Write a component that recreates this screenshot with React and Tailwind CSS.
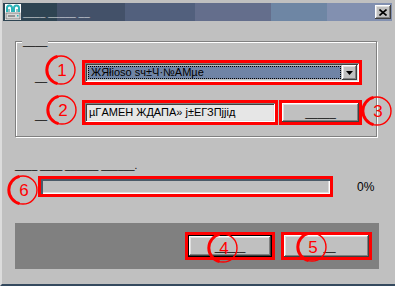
import React from "react";

const raised =
  "shadow-[inset_-1px_-1px_0_#404040,inset_1px_1px_0_#ffffff,inset_-2px_-2px_0_#808080,inset_2px_2px_0_#dfdfdf]";
const sunken =
  "shadow-[inset_1px_1px_0_#808080,inset_-1px_-1px_0_#ffffff,inset_2px_2px_0_#404040,inset_-2px_-2px_0_#dfdfdf]";

const Marker = ({ n, x, y }) => (
  <svg
    className="absolute pointer-events-none"
    style={{ left: x - 17, top: y - 17 }}
    width="34"
    height="34"
    viewBox="0 0 34 34"
  >
    <circle cx="17" cy="17" r="14" fill="none" stroke="#ff0000" strokeWidth="1.4" />
    <path
      d="M15 3.4 A14 14 0 0 0 15 30.6"
      fill="none"
      stroke="#ff0000"
      strokeWidth="3"
      transform="translate(-1.5 0)"
    />
    <text
      x="18"
      y="23"
      textAnchor="middle"
      fill="#ff0000"
      fontFamily="Liberation Sans, Arial, sans-serif"
      fontSize="17"
    >
      {n}
    </text>
  </svg>
);

const AppIcon = () => (
  <svg width="16" height="16" viewBox="0 0 16 16">
    <rect x="0" y="0" width="16" height="16" fill="#ffffff" />
    <path d="M2 8 V4 Q2 1.5 4.5 1.5 Q7 1.5 7 4 V8" fill="none" stroke="#2bb3b8" strokeWidth="2" />
    <path d="M9 8 V4 Q9 1.5 11.5 1.5 Q14 1.5 14 4 V8" fill="none" stroke="#2bb3b8" strokeWidth="2" />
    <path d="M4 5 V8 M12 5 V8" stroke="#1e7c80" strokeWidth="1" />
    <rect x="1" y="9" width="14" height="6" fill="#d8d8d8" stroke="#707070" strokeWidth="0.8" />
    <rect x="3" y="11.5" width="7" height="1" fill="#505050" />
    <rect x="12" y="11" width="1.5" height="1.5" fill="#2bb3b8" />
  </svg>
);

export default function App() {
  return (
    <div
      className="relative w-[395px] h-[286px] bg-[#c0c0c0] flex flex-col border-l-2 border-l-[#dcdcdc] border-b-2 border-b-[#34495e] overflow-hidden"
      style={{ fontFamily: "'Liberation Sans', Arial, sans-serif" }}
    >
      {/* title bar */}
      <div className="mt-[3px] ml-[1px] mr-[3px] h-[18px] flex items-center bg-[linear-gradient(to_right,#2e4452_0px,#2e4452_54px,#435169_54px,#435169_122px,#52607d_122px,#52607d_192px,#646e8c_192px,#646e8c_268px,#6e86a4_268px,#6e86a4_324px,#8290b0_324px)]">
        <div className="ml-[2px] flex items-center">
          <AppIcon />
        </div>
        <div className="ml-[2px] text-white text-[10px] font-bold leading-none mt-[2px] whitespace-pre">
          ____ _____ __
        </div>
        <div className="flex-1" />
        <div className={`w-[16px] h-[14px] bg-[#c0c0c0] ${raised} flex items-center justify-center mr-[1px]`}>
          <svg width="8" height="7" viewBox="0 0 8 7">
            <path d="M0.5 0.5 L7.5 6.5 M7.5 0.5 L0.5 6.5" stroke="#000" strokeWidth="1.6" />
          </svg>
        </div>
      </div>

      {/* group box */}
      <div className="relative mt-[20px] ml-[13px] w-[362px] h-[96px] border border-[#808080] shadow-[inset_1px_1px_0_#ffffff,1px_1px_0_#ffffff]">
        <div className="absolute -top-[8px] left-[6px] px-[1px] bg-[#c0c0c0] text-[11px] leading-[14px] text-black">
          ____
        </div>
        <div className="flex flex-col pt-[18px] pl-[19px]">
          {/* row 1 */}
          <div className="flex items-center h-[25px]">
            <div className="w-[47px] text-[11px] text-black leading-none mt-[10px]">__</div>
            <div className="w-[280px] h-[25px] border-[3px] border-[#ff0000] bg-[#c0c0c0]">
              <div className={`h-full ${sunken} p-[2px] flex`}>
                <div className="flex-1 bg-[#6f84a6] m-[1px] border border-dotted border-black flex items-center pl-[2px] text-[11px] text-black leading-none whitespace-nowrap overflow-hidden">
                  ЖЯłioso sч±Ч·№АМµе
                </div>
                <div className={`w-[15px] bg-[#c0c0c0] ${raised} flex items-center justify-center`}>
                  <svg width="7" height="4" viewBox="0 0 7 4">
                    <path d="M0 0 H7 L3.5 4 Z" fill="#000" />
                  </svg>
                </div>
              </div>
            </div>
          </div>
          {/* row 2 */}
          <div className="flex items-center h-[25px] mt-[15px]">
            <div className="w-[47px] text-[11px] text-black leading-none mt-[6px]">__</div>
            <div className="w-[196px] h-[25px] border-[3px] border-[#ff0000]">
              <div className={`h-full ${sunken} bg-[#e6e6e6] flex items-center pl-[4px] text-[11px] text-black leading-none whitespace-nowrap overflow-hidden`}>
                µΓАМЕН ЖДАПА» j±ЕГЗПjjiд
              </div>
            </div>
            <div className="ml-[1px] w-[83px] h-[25px] border-[3px] border-[#ff0000]">
              <div className={`h-full bg-[#c0c0c0] ${raised} flex items-center justify-center text-[11px] text-black leading-none`}>
                <span className="mt-[2px]">_____</span>
              </div>
            </div>
          </div>
        </div>
      </div>

      {/* progress label */}
      <div className="mt-[23px] ml-[13px] text-[10px] leading-[12px] text-black whitespace-pre">
        ____ ____ ______ ______.
      </div>

      {/* progress row */}
      <div className="mt-[4px] flex items-center">
        <div className="ml-[36px] w-[295px] h-[21px] border-[3px] border-[#ff0000]">
          <div className="h-full bg-[#c0c0c0] shadow-[inset_2px_2px_0_#4a5a68,inset_-1px_-1px_0_#ffffff,inset_-2px_-2px_0_#dcdcdc]" />
        </div>
        <div className="ml-[24px] text-[12px] leading-none text-black">0%</div>
      </div>

      {/* bottom panel */}
      <div className="mt-[26px] ml-[13px] w-[364px] h-[46px] bg-[#808080] flex items-center justify-end pr-[7px]">
        <div className="w-[90px] h-[28px] border-[3px] border-[#ff0000]">
          <div className="h-full border border-black">
            <div className={`h-full bg-[#c0c0c0] ${raised} flex items-center justify-center text-[11px] leading-none text-black`}>
              <span className="mt-[2px]">_____</span>
            </div>
          </div>
        </div>
        <div className="ml-[6px] w-[91px] h-[28px] border-[3px] border-[#ff0000]">
          <div className={`h-full bg-[#c0c0c0] ${raised} flex items-center justify-center text-[11px] leading-none text-black`}>
            <span className="mt-[2px] ml-[6px]">__</span>
          </div>
        </div>
      </div>

      <Marker n="1" x={59} y={70} />
      <Marker n="2" x={60} y={110} />
      <Marker n="3" x={375} y={111} />
      <Marker n="6" x={21} y={190} />
      <Marker n="4" x={221} y={248} />
      <Marker n="5" x={310} y={247} />
    </div>
  );
}
